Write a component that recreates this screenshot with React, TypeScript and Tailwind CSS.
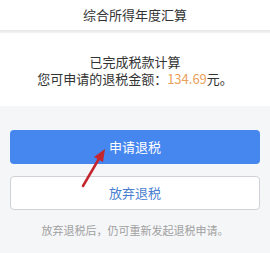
const App = () => {
  return (
    <div
      className="relative flex flex-col h-[253px] w-[270px] bg-[#f5f6f8] text-[#333]"
      style={{ fontFamily: '"Noto Sans CJK SC", "Noto Sans", sans-serif' }}
    >
      <header className="h-[30px] bg-white flex items-center justify-center text-[13px]">
        综合所得年度汇算
      </header>
      <div className="h-[3px] bg-gradient-to-b from-[#e6e6e6] to-[#f3f3f3]" />

      <section className="h-[73px] bg-white pt-[20px] text-center text-[13px] leading-[17px]">
        <p>已完成税款计算</p>
        <p>
          您可申请的退税金额：
          <span className="text-[#e9a15a]">134.69</span>元。
        </p>
      </section>

      <main className="flex-1 px-[10px] pt-[24px]">
        <button className="w-full h-[34px] rounded-[4px] bg-[#4586ef] text-white text-[13px]">
          申请退税
        </button>
        <button className="mt-[12px] w-full h-[34px] rounded-[4px] bg-white border border-[#cfd3d8] text-[#4a7fd0] text-[13px]">
          放弃退税
        </button>
        <p className="mt-[12px] text-center text-[11px] leading-[16px] text-[#a0a0a0]">
          放弃退税后，仍可重新发起退税申请。
        </p>
      </main>

      {/* annotation arrow */}
      <svg
        className="absolute left-0 top-0 pointer-events-none"
        width="270"
        height="253"
        viewBox="0 0 270 253"
      >
        <line x1="83" y1="186" x2="100" y2="157" stroke="#c4262e" strokeWidth="2.5" strokeLinecap="round" />
        <polygon points="105,149 94,157 103,162" fill="#c4262e" />
      </svg>
    </div>
  );
};

export default App;
